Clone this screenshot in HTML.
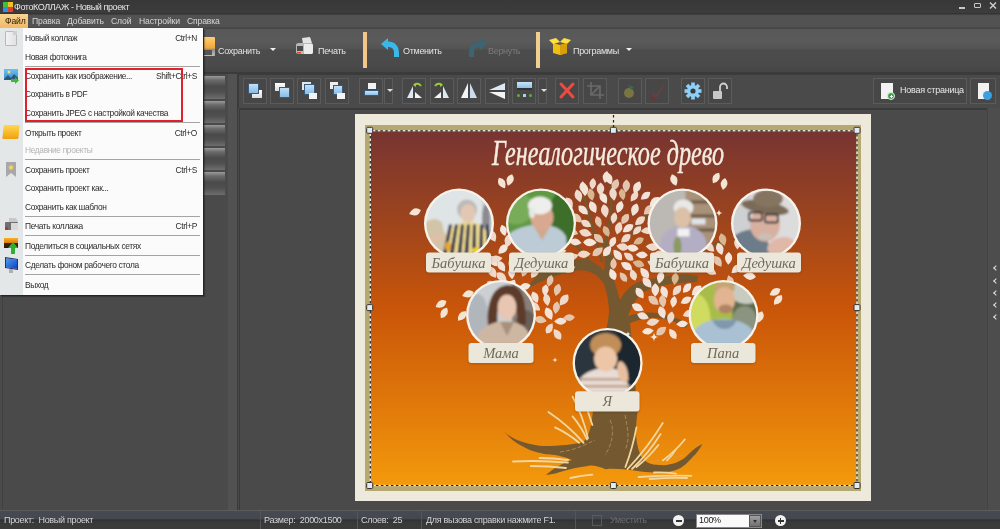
<!DOCTYPE html>
<html><head><meta charset="utf-8">
<style>
*{margin:0;padding:0;box-sizing:border-box}
html,body{width:1000px;height:529px;overflow:hidden;background:#4a4a4a;font-family:"Liberation Sans",sans-serif;}
body{will-change:transform}
.abs,div,span,svg{position:absolute}
#title{left:0;top:0;width:1000px;height:14px;background:linear-gradient(#383838,#3c3c3c 90%,#303030 100%);color:#e6e6e6;font-size:9px;line-height:14px;letter-spacing:-0.4px}
#menubar{left:0;top:14px;width:1000px;height:14px;background:linear-gradient(#3a3a3a,#525252 12%,#525252 90%,#464646);color:#d6d6d6;font-size:8.6px;line-height:14px;letter-spacing:-0.15px}
#menubar span{top:0;white-space:nowrap}
#toolbar{left:0;top:28px;width:1000px;height:44px;background:linear-gradient(#585858 0,#5a5a5a 30%,#545454 46%,#4c4c4c 51%,#4a4a4a 85%,#454545 100%)}
#tbdark{left:0;top:71.5px;width:1000px;height:3px;background:#3b3b3b}
#leftp{left:0;top:74px;width:228px;height:436px;background:#4a4a4a}
#lstrip{left:228px;top:74px;width:10px;height:436px;background:#525252;border-right:1px solid #3a3a3a}
#tb2{left:238px;top:74.5px;width:762px;height:33.5px;background:#4a4a4a;border-left:1px solid #3c3c3c}
#work{left:239px;top:107.5px;width:748px;height:402.5px;background:#4a4a4a;border-top:2px solid #3b3b3b;border-left:1px solid #3a3a3a}
#rstrip{left:987px;top:108px;width:13px;height:402px;background:#4d4d4d;border-left:1px solid #444}
#status{left:0;top:510px;width:1000px;height:19px;background:linear-gradient(#474a51 0,#454850 42%,#2f3134 50%,#383939 62%,#3b3b3b 100%);border-top:1px solid #5c5c5c;color:#d4d4d4;font-size:9px;line-height:18px}
#status span{top:0;white-space:nowrap;letter-spacing:-0.3px}
#status .vs{top:0;width:1px;height:19px;background:#555}
.btn{top:78px;height:26px;width:24px;border:1px solid #5b5b5b;background:#474747}
.dd{top:78px;height:26px;width:9px;border:1px solid #5b5b5b;background:#474747}
.dd:after{content:"";position:absolute;left:1.5px;top:10px;border-left:3px solid transparent;border-right:3px solid transparent;border-top:3px solid #ddd}
.tbt{color:#e4e4e4;font-size:9px;line-height:12px;top:44px;white-space:nowrap;letter-spacing:-0.3px}
#menu{left:0;top:28px;width:203px;height:267px;background:#fbfbfb;box-shadow:1px 1px 0 #262626,2px 2px 1px rgba(0,0,0,0.25);color:#2c2c2c;font-size:8.4px;letter-spacing:-0.35px}
#menu .strip{left:0;top:0;width:23px;height:267px;background:#e4e7e7}
#menu .it{left:25px;line-height:12px;white-space:nowrap}
#menu .sc{right:6px;line-height:12px;white-space:nowrap}
#menu .sep{left:25px;width:175px;height:1px;background:#a4a4a4}
</style></head><body>
<div id="title">
  <div style="left:3px;top:2px;width:10px;height:10px">
    <div style="left:0;top:0;width:5px;height:5px;background:#3fbf3f"></div>
    <div style="left:5px;top:0;width:5px;height:5px;background:#f0c020"></div>
    <div style="left:0;top:5px;width:5px;height:5px;background:#2f8fe0"></div>
    <div style="left:5px;top:5px;width:5px;height:5px;background:#e04030"></div>
  </div>
  <span style="left:14px;top:0">ФотоКОЛЛАЖ - Новый проект</span>
  <div style="left:959px;top:7px;width:6px;height:1.5px;background:#c8c8c8"></div>
  <div style="left:974px;top:3px;width:7px;height:5px;border:1.5px solid #c8c8c8;border-radius:1px"></div>
  <svg style="left:989px;top:2px" width="8" height="7" viewBox="0 0 8 7"><path d="M1 0.5 L7 6.5 M7 0.5 L1 6.5" stroke="#d0d0d0" stroke-width="1.4"/></svg>
</div>
<div id="menubar">
  <div style="left:0;top:0;width:28px;height:14px;background:linear-gradient(#f8d594,#f1b965)"></div>
  <span style="left:5px;color:#2a1a08">Файл</span>
  <span style="left:32px">Правка</span>
  <span style="left:67px">Добавить</span>
  <span style="left:111px">Слой</span>
  <span style="left:139px">Настройки</span>
  <span style="left:187px">Справка</span>
</div>
<div id="toolbar">
  <div style="left:0;top:0;width:1000px;height:1px;background:#464646"></div>
  <!-- save -->
  <div style="left:202px;top:9px;width:13px;height:19px;background:linear-gradient(#ffd070,#f2a43a 60%,#8a8a8a 62%,#bdbdbd);border-radius:1px"></div>
  <div style="left:204px;top:22px;width:8px;height:5px;background:#555"></div>
  <span class="tbt" style="left:218px;top:17px">Сохранить</span>
  <div style="left:270px;top:20px;border-left:3px solid transparent;border-right:3px solid transparent;border-top:3.5px solid #f0f0f0"></div>
  <!-- print -->
  <svg style="left:295px;top:9px" width="19" height="19" viewBox="0 0 19 19"><path d="M7 1 L15 0 L17 6 L8 7Z" fill="#e4e4e4"/><path d="M1 8 Q1 6 4 6 L16 6 Q18 6 18 9 L18 15 Q18 17 16 17 L4 17 Q1 17 1 15Z" fill="#b8b8b8"/><path d="M9 7 L17 7 Q18 7 18 9 L18 15 Q18 17 16 17 L9 17Z" fill="#ececec"/><rect x="2" y="9" width="6" height="5" fill="#4a4a4a"/><rect x="2" y="15" width="4" height="1.6" fill="#e04a20"/></svg>
  <span class="tbt" style="left:318px;top:17px">Печать</span>
  <div style="left:363px;top:4px;width:4px;height:36px;background:#f3c68a"></div>
  <!-- undo -->
  <svg style="left:381px;top:10px" width="20" height="20" viewBox="0 0 20 20"><path d="M0 6 L7 0 L7 3.5 C14 3.5 18 8 18 15 L18 19 L13 19 L13 15 C13 11 11 9 7 9 L7 12 Z" fill="#3ab8ea"/></svg>
  <span class="tbt" style="left:403px;top:17px">Отменить</span>
  <svg style="left:467px;top:10px" width="20" height="20" viewBox="0 0 20 20"><path d="M20 6 L13 0 L13 3.5 C6 3.5 2 8 2 15 L2 19 L7 19 L7 15 C7 11 9 9 13 9 L13 12 Z" fill="#3d6470"/></svg>
  <span class="tbt" style="left:488px;top:17px;color:#7c7c7c">Вернуть</span>
  <div style="left:536px;top:4px;width:4px;height:36px;background:#f0d090"></div>
  <!-- programs -->
  <svg style="left:549px;top:10px" width="22" height="17" viewBox="0 0 22 17"><path d="M4 5 L11 7 L18 5 L18 15 L11 17 L4 15Z" fill="#f0c010"/><path d="M0 2 L7 0 L11 4 L4 6Z M11 4 L15 0 L22 2 L18 6Z" fill="#ffe040"/><path d="M11 7 L18 5 L18 15 L11 17Z" fill="#d8a008"/></svg>
  <span class="tbt" style="left:573px;top:17px">Программы</span>
  <div style="left:626px;top:20px;border-left:3px solid transparent;border-right:3px solid transparent;border-top:3.5px solid #f0f0f0"></div>
</div>
<div id="tbdark"></div>
<div id="leftp"><div style="left:2px;top:0;width:1px;height:436px;background:#414141"></div></div>
<div id="lstrip"></div>
<div id="tb2"></div>
<div class="btn" style="left:243px"><div style="left:8px;top:11px;width:10px;height:8px;background:linear-gradient(#fff,#dcdcdc)"></div><div style="left:4px;top:4px;width:11px;height:11px;background:linear-gradient(#c0e0fa,#88bce6);border:1px solid #3a5a78"></div></div>
<div class="btn" style="left:270px"><div style="left:4px;top:4px;width:10px;height:8px;background:linear-gradient(#fff,#dcdcdc)"></div><div style="left:8px;top:8px;width:11px;height:11px;background:linear-gradient(#c0e0fa,#88bce6);border:1px solid #3a5a78"></div></div>
<div class="btn" style="left:297px"><div style="left:4px;top:3px;width:9px;height:8px;background:#dde8f2"></div><div style="left:6px;top:5px;width:11px;height:11px;background:linear-gradient(#c0e0fa,#88bce6);border:1px solid #3a5a78"></div><div style="left:11px;top:14px;width:8px;height:6px;background:#f4f4f4"></div></div>
<div class="btn" style="left:325px"><div style="left:4px;top:3px;width:8px;height:7px;background:#eee"></div><div style="left:7px;top:6px;width:10px;height:10px;background:linear-gradient(#c0e0fa,#88bce6);border:1px solid #3a5a78"></div><div style="left:11px;top:14px;width:8px;height:6px;background:#f4f4f4"></div></div>
<div class="btn" style="left:359px"><div style="left:8px;top:4px;width:8px;height:6px;background:#f2f2f2"></div><div style="left:4px;top:11px;width:15px;height:6px;background:linear-gradient(#c8e4fa,#90c0e8);border:1px solid #3a5a78"></div></div>
<div class="dd" style="left:384px"></div>
<div class="btn" style="left:402px"><svg width="22" height="24" viewBox="0 0 22 24"><path d="M4 19 L10 7 L10 19Z" fill="#dce8f4"/><path d="M12 13 L12 19 L19 19Z" fill="#f4f4f4"/><path d="M11 6 Q15 3 18 7" stroke="#9ccc30" stroke-width="2" fill="none"/><path d="M10 6 l3 -2 l0 4z" fill="#9ccc30"/></svg></div>
<div class="btn" style="left:430px"><svg width="22" height="24" viewBox="0 0 22 24"><path d="M18 19 L12 7 L12 19Z" fill="#dce8f4"/><path d="M10 13 L10 19 L3 19Z" fill="#f4f4f4"/><path d="M11 6 Q7 3 4 7" stroke="#9ccc30" stroke-width="2" fill="none"/><path d="M12 6 l-3 -2 l0 4z" fill="#9ccc30"/></svg></div>
<div class="btn" style="left:457px"><svg width="22" height="24" viewBox="0 0 22 24"><path d="M3 19 L10 4 L10 19Z" fill="#f4f4f4"/><path d="M12 4 L19 19 L12 19Z" fill="#c8dcee"/></svg></div>
<div class="btn" style="left:485px"><svg width="22" height="24" viewBox="0 0 22 24"><path d="M3 11 L19 4 L19 11Z" fill="#dce8f4"/><path d="M3 13 L19 13 L19 20Z" fill="#f4f4f4"/></svg></div>
<div class="btn" style="left:512px"><div style="left:4px;top:3px;width:15px;height:6px;background:linear-gradient(#c8e4fa,#90c0e8)"></div><div style="left:4px;top:9px;width:15px;height:2px;background:#333"></div><div style="left:4px;top:15px;width:3px;height:3px;background:#60b030;border-radius:2px"></div><div style="left:10px;top:15px;width:3px;height:3px;background:#a8d0f0"></div><div style="left:16px;top:15px;width:3px;height:3px;background:#60b030;border-radius:2px"></div></div>
<div class="dd" style="left:538px"></div>
<div class="btn" style="left:555px"><svg width="22" height="24" viewBox="0 0 22 24"><path d="M5 5 L17 18 M17 5 L5 18" stroke="#f04a40" stroke-width="3" stroke-linecap="round"/></svg></div>
<div class="btn" style="left:583px"><svg width="22" height="24" viewBox="0 0 22 24"><path d="M7 3 V16 H20 M3 7 H16 V20 M7 16 L16 7" stroke="#6a6a6a" stroke-width="1.6" fill="none"/></svg></div>
<div class="btn" style="left:618px"><svg width="22" height="24" viewBox="0 0 22 24"><circle cx="10" cy="14" r="5" fill="#7a7440"/><path d="M9 6 L15 8 L12 11z" fill="#3a6a50"/></svg></div>
<div class="btn" style="left:645px"><svg width="22" height="24" viewBox="0 0 22 24"><path d="M6 14 L10 18 L18 6" stroke="#6a4040" stroke-width="1.5" fill="none"/><path d="M5 18 L9 20" stroke="#7a3030" stroke-width="2"/></svg></div>
<div class="btn" style="left:681px"><svg width="22" height="24" viewBox="0 0 22 24"><g transform="translate(11 12)"><circle r="6" fill="#8cd0f8"/><g fill="#8cd0f8"><rect x="-1.8" y="-8.5" width="3.6" height="17"/><rect x="-1.8" y="-8.5" width="3.6" height="17" transform="rotate(45)"/><rect x="-1.8" y="-8.5" width="3.6" height="17" transform="rotate(90)"/><rect x="-1.8" y="-8.5" width="3.6" height="17" transform="rotate(135)"/></g><circle r="2.6" fill="#3a3a3a"/></g></svg></div>
<div class="btn" style="left:708px"><svg width="22" height="24" viewBox="0 0 22 24"><rect x="4" y="12" width="9" height="8" rx="1" fill="#c8c8c8"/><path d="M11 12 V8 A3.5 3.5 0 0 1 18 8 V10" stroke="#d0d0d0" stroke-width="1.8" fill="none"/></svg></div>
<div class="btn" style="left:873px;width:94px"><div style="left:7px;top:4px;width:12px;height:16px;background:#f2f2f2"></div><div style="left:13px;top:13px;width:8px;height:8px;border-radius:50%;background:#30a840;border:1px solid #e8e8e8"></div><div style="left:15.5px;top:16.5px;width:3px;height:1px;background:#fff"></div><div style="left:16.5px;top:15.5px;width:1px;height:3px;background:#fff"></div><span style="left:26px;top:6px;color:#e8e8e8;font-size:9px;letter-spacing:-0.25px;white-space:nowrap">Новая страница</span></div>
<div class="btn" style="left:970px;width:26px"><div style="left:7px;top:4px;width:11px;height:16px;background:#f2f2f2"></div><div style="left:12px;top:12px;width:9px;height:9px;border-radius:50%;background:#3aa0e0"></div></div>
<div id="work"></div>
<div id="rstrip"></div>
<div style="left:202px;top:76.0px;width:23px;height:23.0px;background:linear-gradient(#9a9a9a,#6a6a6a 18%,#4a4a4a 45%,#505050 70%,#6e6e6e);border-radius:2px 0 0 2px"></div>
<div style="left:202px;top:100.5px;width:23px;height:22.0px;background:linear-gradient(#9a9a9a,#6a6a6a 18%,#4a4a4a 45%,#505050 70%,#6e6e6e);border-radius:2px 0 0 2px"></div>
<div style="left:202px;top:124.5px;width:23px;height:21.5px;background:linear-gradient(#9a9a9a,#6a6a6a 18%,#4a4a4a 45%,#505050 70%,#6e6e6e);border-radius:2px 0 0 2px"></div>
<div style="left:202px;top:148.0px;width:23px;height:21.5px;background:linear-gradient(#9a9a9a,#6a6a6a 18%,#4a4a4a 45%,#505050 70%,#6e6e6e);border-radius:2px 0 0 2px"></div>
<div style="left:202px;top:172.0px;width:23px;height:22.5px;background:linear-gradient(#9a9a9a,#6a6a6a 18%,#4a4a4a 45%,#505050 70%,#6e6e6e);border-radius:2px 0 0 2px"></div>
<div style="left:993.5px;top:266.0px;width:4px;height:4px;border-left:1.6px solid #e4e4e4;border-top:1.6px solid #e4e4e4;transform:rotate(-45deg)"></div>
<div style="left:993.5px;top:278.5px;width:4px;height:4px;border-left:1.6px solid #e4e4e4;border-top:1.6px solid #e4e4e4;transform:rotate(-45deg)"></div>
<div style="left:993.5px;top:290.5px;width:4px;height:4px;border-left:1.6px solid #e4e4e4;border-top:1.6px solid #e4e4e4;transform:rotate(-45deg)"></div>
<div style="left:993.5px;top:303.0px;width:4px;height:4px;border-left:1.6px solid #e4e4e4;border-top:1.6px solid #e4e4e4;transform:rotate(-45deg)"></div>
<div style="left:993.5px;top:315.0px;width:4px;height:4px;border-left:1.6px solid #e4e4e4;border-top:1.6px solid #e4e4e4;transform:rotate(-45deg)"></div>

<!--COLLAGE-->
<svg style="left:0;top:0" width="1000" height="529" viewBox="0 0 1000 529">
<defs>
<linearGradient id="bg" x1="0" y1="130" x2="0" y2="486" gradientUnits="userSpaceOnUse">
<stop offset="0" stop-color="#773432"/><stop offset="0.25" stop-color="#9d441e"/><stop offset="0.5" stop-color="#c95509"/><stop offset="0.76" stop-color="#df770a"/><stop offset="1" stop-color="#f49a0c"/>
</linearGradient>
<clipPath id="content"><rect x="371" y="131" width="485.5" height="354.5"/></clipPath>
</defs>
<rect x="355" y="114" width="516" height="387" fill="#eeeadb"/>
<rect x="365" y="125" width="496" height="366" fill="#b5a870"/>
<rect x="371" y="131" width="485.5" height="354.5" fill="url(#bg)"/>
<g clip-path="url(#content)">
<path d="M504.4,431.8 C510,437 516,440 522,441.7 C530,444 538,446 544,446 C552,446 560,445.5 566,445 C574,444 580,443 583.6,441.7 C590,436 592,422 593,410 C596,385 601,360 604,340 C607,327 609,318 609,309 C608,297 606,290 604,284 C599,276 592,271 583.6,270.4 C578,270 574,271 570,272 C560,274 548,278 538,283 C534,285 530,287 526,290 C532,280 540,270 555,263 C565,259 578,258 587,260 C594,262 600,266 604,271 C606,262 604,252 601,240 L607,238 C611,250 613,262 612,272 C614,280 617,290 620,300 C624,292 630,286 638,282.3 C645,280 655,278 670,275.5 C680,274 690,274 698,276 L697,282 C688,282 678,283 670,284 C660,286 650,288 643,292.5 C636,298 632,306 628,316 C640,312 655,311 670,316 C678,318 684,321 688,324 L686,328 C680,324 672,320 662,318.5 C650,317 640,319 630,323 C633,350 635,385 637.5,412 C636,425 634,440 640.8,456 C645,462 650,465 660,465 C670,466 682,462 689,453.8 C694,449 698,446 702.4,444 C699,450 696,454 693.6,456 C688,462 684,467 676,470 C668,473 655,473 641,471.4 C630,470 615,468 605.6,469.2 C598,466 592,465 588,465.9 C578,467 570,469 560,472 C554,474 549,475 546,474.7 C552,470 560,464 572,460 C565,457 560,456 555,455 C548,454.5 544,454 540,453 C532,451 527,449 522,446 C514,442 509,437 504.4,431.8 Z" fill="#74582f"/>
<path d="M602,262 C596,240 590,220 584,196 M605,245 C610,225 613,205 611,186 M610,262 C626,240 640,222 656,204 M590,262 C582,250 575,244 566,238 M660,277 C680,262 700,250 725,240" stroke="#74582f" stroke-width="2.5" fill="none"/>
<path d="M610 420 C615 430 612 445 605 455 M625 415 C628 430 630 440 625 450 M560 452 C575 450 585 445 595 440 M650 462 C660 460 670 458 685 455" stroke="#c8a070" stroke-width="0.8" fill="none" stroke-dasharray="4 2" opacity="0.8"/>
<path d="M572.6 396.6 Q583.1 416.5 588.0 438.4" stroke="#f2d69e" stroke-width="1.8" fill="none" stroke-linecap="round"/>
<path d="M548.4 412.0 Q568.0 425.1 583.6 442.8" stroke="#f2d69e" stroke-width="1.8" fill="none" stroke-linecap="round"/>
<path d="M555.0 427.4 Q568.1 433.4 579.0 442.8" stroke="#f2d69e" stroke-width="1.8" fill="none" stroke-linecap="round"/>
<path d="M572.6 416.4 Q581.5 426.9 587.0 439.5" stroke="#f2d69e" stroke-width="1.8" fill="none" stroke-linecap="round"/>
<path d="M588.0 412.0 Q590.2 418.5 592.4 425.0" stroke="#f2d69e" stroke-width="1.8" fill="none" stroke-linecap="round"/>
<path d="M513.0 461.5 Q540.5 460.1 568.0 462.6" stroke="#f2d69e" stroke-width="1.8" fill="none" stroke-linecap="round"/>
<path d="M530.8 466.0 Q548.5 466.0 566.0 468.0" stroke="#f2d69e" stroke-width="1.8" fill="none" stroke-linecap="round"/>
<path d="M539.6 458.0 Q553.9 458.0 568.0 460.0" stroke="#f2d69e" stroke-width="1.8" fill="none" stroke-linecap="round"/>
<path d="M570.4 478.0 Q581.3 475.4 592.4 474.7" stroke="#f2d69e" stroke-width="1.8" fill="none" stroke-linecap="round"/>
<path d="M627.6 469.0 Q647.6 447.8 662.8 423.0" stroke="#f2d69e" stroke-width="1.8" fill="none" stroke-linecap="round"/>
<path d="M632.0 469.0 Q648.6 453.4 660.6 434.0" stroke="#f2d69e" stroke-width="1.8" fill="none" stroke-linecap="round"/>
<path d="M636.4 467.0 Q648.8 457.4 658.4 445.0" stroke="#f2d69e" stroke-width="1.8" fill="none" stroke-linecap="round"/>
<path d="M625.4 467.0 Q632.8 447.7 636.4 427.4" stroke="#f2d69e" stroke-width="1.8" fill="none" stroke-linecap="round"/>
<path d="M662.8 460.4 Q675.2 451.4 684.8 439.5" stroke="#f2d69e" stroke-width="1.8" fill="none" stroke-linecap="round"/>
<path d="M667.0 460.4 Q672.3 455.5 676.0 449.4" stroke="#f2d69e" stroke-width="1.8" fill="none" stroke-linecap="round"/>
<path d="M638.6 477.0 Q665.0 475.4 691.4 475.8" stroke="#f2d69e" stroke-width="1.8" fill="none" stroke-linecap="round"/>
<path d="M649.6 479.0 Q668.3 477.5 687.0 478.0" stroke="#f2d69e" stroke-width="1.8" fill="none" stroke-linecap="round"/>
<path d="M654.0 472.5 Q665.0 472.1 676.0 473.6" stroke="#f2d69e" stroke-width="1.8" fill="none" stroke-linecap="round"/>
<path d="M0,-6.2 Q7,-1 0,6.2 Q-7,-1 0,-6.2Z" transform="translate(591.0 194.6) rotate(-12) scale(1.01)" fill="#d8b690"/>
<path d="M0,-6.2 Q7,-1 0,6.2 Q-7,-1 0,-6.2Z" transform="translate(626.3 186.0) rotate(4) scale(1.06)" fill="#e4c6ae"/>
<path d="M0,-6.2 Q7,-1 0,6.2 Q-7,-1 0,-6.2Z" transform="translate(613.9 218.2) rotate(11) scale(0.97)" fill="#efd9cb"/>
<path d="M0,-6.2 Q7,-1 0,6.2 Q-7,-1 0,-6.2Z" transform="translate(562.3 233.8) rotate(-86) scale(1.00)" fill="#d8b690"/>
<path d="M0,-6.2 Q7,-1 0,6.2 Q-7,-1 0,-6.2Z" transform="translate(569.4 202.6) rotate(-33) scale(0.97)" fill="#efd9cb"/>
<path d="M0,-6.2 Q7,-1 0,6.2 Q-7,-1 0,-6.2Z" transform="translate(648.7 209.9) rotate(47) scale(1.09)" fill="#e4c6ae"/>
<path d="M0,-6.2 Q7,-1 0,6.2 Q-7,-1 0,-6.2Z" transform="translate(575.5 242.0) rotate(-81) scale(0.98)" fill="#f2e2d8"/>
<path d="M0,-6.2 Q7,-1 0,6.2 Q-7,-1 0,-6.2Z" transform="translate(625.0 219.0) rotate(33) scale(1.01)" fill="#e4c6ae"/>
<path d="M0,-6.2 Q7,-1 0,6.2 Q-7,-1 0,-6.2Z" transform="translate(615.2 184.9) rotate(23) scale(1.03)" fill="#e4c6ae"/>
<path d="M0,-6.2 Q7,-1 0,6.2 Q-7,-1 0,-6.2Z" transform="translate(589.9 242.4) rotate(-88) scale(1.09)" fill="#f4e6dc"/>
<path d="M0,-6.2 Q7,-1 0,6.2 Q-7,-1 0,-6.2Z" transform="translate(604.9 211.0) rotate(-11) scale(1.09)" fill="#efd9cb"/>
<path d="M0,-6.2 Q7,-1 0,6.2 Q-7,-1 0,-6.2Z" transform="translate(641.8 254.9) rotate(94) scale(0.98)" fill="#f2e2d8"/>
<path d="M0,-6.2 Q7,-1 0,6.2 Q-7,-1 0,-6.2Z" transform="translate(612.7 274.3) rotate(158) scale(1.02)" fill="#f4e6dc"/>
<path d="M0,-6.2 Q7,-1 0,6.2 Q-7,-1 0,-6.2Z" transform="translate(634.8 209.7) rotate(19) scale(1.06)" fill="#f2e2d8"/>
<path d="M0,-6.2 Q7,-1 0,6.2 Q-7,-1 0,-6.2Z" transform="translate(572.4 231.8) rotate(-70) scale(0.98)" fill="#e4c6ae"/>
<path d="M0,-6.2 Q7,-1 0,6.2 Q-7,-1 0,-6.2Z" transform="translate(560.2 251.5) rotate(261) scale(1.01)" fill="#efd9cb"/>
<path d="M0,-6.2 Q7,-1 0,6.2 Q-7,-1 0,-6.2Z" transform="translate(638.6 241.0) rotate(61) scale(0.95)" fill="#d8b690"/>
<path d="M0,-6.2 Q7,-1 0,6.2 Q-7,-1 0,-6.2Z" transform="translate(618.6 228.2) rotate(14) scale(1.06)" fill="#efd9cb"/>
<path d="M0,-6.2 Q7,-1 0,6.2 Q-7,-1 0,-6.2Z" transform="translate(607.2 251.1) rotate(215) scale(1.03)" fill="#f2e2d8"/>
<path d="M0,-6.2 Q7,-1 0,6.2 Q-7,-1 0,-6.2Z" transform="translate(597.7 251.6) rotate(232) scale(1.07)" fill="#e4c6ae"/>
<path d="M0,-6.2 Q7,-1 0,6.2 Q-7,-1 0,-6.2Z" transform="translate(644.5 273.0) rotate(142) scale(1.07)" fill="#f2e2d8"/>
<path d="M0,-6.2 Q7,-1 0,6.2 Q-7,-1 0,-6.2Z" transform="translate(586.1 223.7) rotate(-59) scale(0.98)" fill="#efd9cb"/>
<path d="M0,-6.2 Q7,-1 0,6.2 Q-7,-1 0,-6.2Z" transform="translate(619.6 206.9) rotate(20) scale(1.03)" fill="#f4e6dc"/>
<path d="M0,-6.2 Q7,-1 0,6.2 Q-7,-1 0,-6.2Z" transform="translate(658.9 254.0) rotate(83) scale(0.95)" fill="#efd9cb"/>
<path d="M0,-6.2 Q7,-1 0,6.2 Q-7,-1 0,-6.2Z" transform="translate(653.1 263.8) rotate(115) scale(1.01)" fill="#f2e2d8"/>
<path d="M0,-6.2 Q7,-1 0,6.2 Q-7,-1 0,-6.2Z" transform="translate(598.4 221.9) rotate(-17) scale(0.98)" fill="#e4c6ae"/>
<path d="M0,-6.2 Q7,-1 0,6.2 Q-7,-1 0,-6.2Z" transform="translate(578.5 195.9) rotate(-16) scale(1.06)" fill="#efd9cb"/>
<path d="M0,-6.2 Q7,-1 0,6.2 Q-7,-1 0,-6.2Z" transform="translate(592.7 183.8) rotate(6) scale(0.96)" fill="#efd9cb"/>
<path d="M0,-6.2 Q7,-1 0,6.2 Q-7,-1 0,-6.2Z" transform="translate(567.0 218.0) rotate(-73) scale(1.05)" fill="#f4e6dc"/>
<path d="M0,-6.2 Q7,-1 0,6.2 Q-7,-1 0,-6.2Z" transform="translate(622.3 194.3) rotate(-10) scale(0.96)" fill="#d8b690"/>
<path d="M0,-6.2 Q7,-1 0,6.2 Q-7,-1 0,-6.2Z" transform="translate(606.3 231.2) rotate(-24) scale(0.97)" fill="#d8b690"/>
<path d="M0,-6.2 Q7,-1 0,6.2 Q-7,-1 0,-6.2Z" transform="translate(593.0 207.1) rotate(-26) scale(1.05)" fill="#f2e2d8"/>
<path d="M0,-6.2 Q7,-1 0,6.2 Q-7,-1 0,-6.2Z" transform="translate(645.5 195.8) rotate(52) scale(0.97)" fill="#f2e2d8"/>
<path d="M0,-6.2 Q7,-1 0,6.2 Q-7,-1 0,-6.2Z" transform="translate(613.1 194.1) rotate(-9) scale(1.08)" fill="#efd9cb"/>
<path d="M0,-6.2 Q7,-1 0,6.2 Q-7,-1 0,-6.2Z" transform="translate(613.5 263.7) rotate(181) scale(0.95)" fill="#e4c6ae"/>
<path d="M0,-6.2 Q7,-1 0,6.2 Q-7,-1 0,-6.2Z" transform="translate(584.0 254.2) rotate(266) scale(1.07)" fill="#efd9cb"/>
<path d="M0,-6.2 Q7,-1 0,6.2 Q-7,-1 0,-6.2Z" transform="translate(659.3 227.2) rotate(79) scale(1.00)" fill="#f2e2d8"/>
<path d="M0,-6.2 Q7,-1 0,6.2 Q-7,-1 0,-6.2Z" transform="translate(659.1 218.1) rotate(46) scale(1.08)" fill="#f4e6dc"/>
<path d="M0,-6.2 Q7,-1 0,6.2 Q-7,-1 0,-6.2Z" transform="translate(623.4 277.0) rotate(144) scale(0.96)" fill="#e4c6ae"/>
<path d="M0,-6.2 Q7,-1 0,6.2 Q-7,-1 0,-6.2Z" transform="translate(646.8 230.7) rotate(85) scale(0.97)" fill="#efd9cb"/>
<path d="M0,-6.2 Q7,-1 0,6.2 Q-7,-1 0,-6.2Z" transform="translate(626.5 266.0) rotate(121) scale(1.06)" fill="#f4e6dc"/>
<path d="M0,-6.2 Q7,-1 0,6.2 Q-7,-1 0,-6.2Z" transform="translate(637.0 230.6) rotate(44) scale(0.95)" fill="#efd9cb"/>
<path d="M0,-6.2 Q7,-1 0,6.2 Q-7,-1 0,-6.2Z" transform="translate(634.3 196.7) rotate(36) scale(0.97)" fill="#efd9cb"/>
<path d="M0,-6.2 Q7,-1 0,6.2 Q-7,-1 0,-6.2Z" transform="translate(583.2 210.2) rotate(-47) scale(1.04)" fill="#f2e2d8"/>
<path d="M0,-6.2 Q7,-1 0,6.2 Q-7,-1 0,-6.2Z" transform="translate(603.5 198.1) rotate(-29) scale(1.02)" fill="#f4e6dc"/>
<path d="M0,-6.2 Q7,-1 0,6.2 Q-7,-1 0,-6.2Z" transform="translate(572.7 256.8) rotate(252) scale(0.97)" fill="#efd9cb"/>
<path d="M0,-6.2 Q7,-1 0,6.2 Q-7,-1 0,-6.2Z" transform="translate(617.6 255.0) rotate(142) scale(1.05)" fill="#f2e2d8"/>
<path d="M0,-6.2 Q7,-1 0,6.2 Q-7,-1 0,-6.2Z" transform="translate(632.3 248.0) rotate(100) scale(1.03)" fill="#f4e6dc"/>
<path d="M0,-6.2 Q7,-1 0,6.2 Q-7,-1 0,-6.2Z" transform="translate(661.0 238.2) rotate(77) scale(1.05)" fill="#efd9cb"/>
<path d="M0,-6.2 Q7,-1 0,6.2 Q-7,-1 0,-6.2Z" transform="translate(633.3 274.7) rotate(159) scale(1.00)" fill="#efd9cb"/>
<path d="M0,-6.2 Q7,-1 0,6.2 Q-7,-1 0,-6.2Z" transform="translate(652.3 247.0) rotate(96) scale(1.09)" fill="#efd9cb"/>
<path d="M0,-6.2 Q7,-1 0,6.2 Q-7,-1 0,-6.2Z" transform="translate(608.8 178.4) rotate(-23) scale(1.05)" fill="#f2e2d8"/>
<path d="M0,-6.2 Q7,-1 0,6.2 Q-7,-1 0,-6.2Z" transform="translate(612.6 242.1) rotate(26) scale(0.96)" fill="#f2e2d8"/>
<path d="M0,-6.2 Q7,-1 0,6.2 Q-7,-1 0,-6.2Z" transform="translate(576.8 218.1) rotate(-53) scale(1.08)" fill="#e4c6ae"/>
<path d="M0,-6.2 Q7,-1 0,6.2 Q-7,-1 0,-6.2Z" transform="translate(598.7 238.5) rotate(-47) scale(1.04)" fill="#e4c6ae"/>
<path d="M0,-6.2 Q7,-1 0,6.2 Q-7,-1 0,-6.2Z" transform="translate(638.5 263.8) rotate(108) scale(1.00)" fill="#d8b690"/>
<path d="M0,-6.2 Q7,-1 0,6.2 Q-7,-1 0,-6.2Z" transform="translate(559.3 223.4) rotate(-50) scale(0.97)" fill="#d8b690"/>
<path d="M0,-6.2 Q7,-1 0,6.2 Q-7,-1 0,-6.2Z" transform="translate(640.0 220.8) rotate(51) scale(1.04)" fill="#efd9cb"/>
<path d="M0,-6.2 Q7,-1 0,6.2 Q-7,-1 0,-6.2Z" transform="translate(622.6 246.9) rotate(101) scale(1.03)" fill="#efd9cb"/>
<path d="M0,-6.2 Q7,-1 0,6.2 Q-7,-1 0,-6.2Z" transform="translate(628.0 228.4) rotate(56) scale(1.04)" fill="#f2e2d8"/>
<path d="M0,-6.2 Q7,-1 0,6.2 Q-7,-1 0,-6.2Z" transform="translate(600.5 189.2) rotate(1) scale(1.07)" fill="#efd9cb"/>
<path d="M0,-6.2 Q7,-1 0,6.2 Q-7,-1 0,-6.2Z" transform="translate(654.5 202.0) rotate(44) scale(1.09)" fill="#f4e6dc"/>
<path d="M0,-6.2 Q7,-1 0,6.2 Q-7,-1 0,-6.2Z" transform="translate(569.3 268.8) rotate(252) scale(1.03)" fill="#efd9cb"/>
<path d="M0,-6.2 Q7,-1 0,6.2 Q-7,-1 0,-6.2Z" transform="translate(636.9 187.5) rotate(26) scale(1.07)" fill="#f2e2d8"/>
<path d="M0,-6.2 Q7,-1 0,6.2 Q-7,-1 0,-6.2Z" transform="translate(562.5 208.9) rotate(-50) scale(1.01)" fill="#efd9cb"/>
<path d="M0,-6.2 Q7,-1 0,6.2 Q-7,-1 0,-6.2Z" transform="translate(585.5 233.0) rotate(-73) scale(1.08)" fill="#efd9cb"/>
<path d="M0,-6.2 Q7,-1 0,6.2 Q-7,-1 0,-6.2Z" transform="translate(625.8 238.4) rotate(50) scale(1.00)" fill="#efd9cb"/>
<path d="M0,-6.2 Q7,-1 0,6.2 Q-7,-1 0,-6.2Z" transform="translate(628.7 256.5) rotate(128) scale(0.98)" fill="#efd9cb"/>
<path d="M0,-6.2 Q7,-1 0,6.2 Q-7,-1 0,-6.2Z" transform="translate(566.2 242.5) rotate(-105) scale(0.97)" fill="#efd9cb"/>
<path d="M0,-6.2 Q7,-1 0,6.2 Q-7,-1 0,-6.2Z" transform="translate(563.4 260.6) rotate(267) scale(1.01)" fill="#f2e2d8"/>
<path d="M0,-6.2 Q7,-1 0,6.2 Q-7,-1 0,-6.2Z" transform="translate(582.8 187.2) rotate(-2) scale(0.98)" fill="#f2e2d8"/>
<path d="M0,-6.2 Q7,-1 0,6.2 Q-7,-1 0,-6.2Z" transform="translate(721.2 285.7) rotate(206) scale(1.00)" fill="#d8b690"/>
<path d="M0,-6.2 Q7,-1 0,6.2 Q-7,-1 0,-6.2Z" transform="translate(736.3 268.8) rotate(49) scale(1.01)" fill="#f2e2d8"/>
<path d="M0,-6.2 Q7,-1 0,6.2 Q-7,-1 0,-6.2Z" transform="translate(751.1 248.7) rotate(22) scale(1.06)" fill="#d8b690"/>
<path d="M0,-6.2 Q7,-1 0,6.2 Q-7,-1 0,-6.2Z" transform="translate(722.0 296.7) rotate(204) scale(0.96)" fill="#efd9cb"/>
<path d="M0,-6.2 Q7,-1 0,6.2 Q-7,-1 0,-6.2Z" transform="translate(728.5 258.4) rotate(3) scale(1.04)" fill="#f4e6dc"/>
<path d="M0,-6.2 Q7,-1 0,6.2 Q-7,-1 0,-6.2Z" transform="translate(705.5 256.0) rotate(-60) scale(1.01)" fill="#efd9cb"/>
<path d="M0,-6.2 Q7,-1 0,6.2 Q-7,-1 0,-6.2Z" transform="translate(735.9 226.0) rotate(0) scale(1.07)" fill="#efd9cb"/>
<path d="M0,-6.2 Q7,-1 0,6.2 Q-7,-1 0,-6.2Z" transform="translate(730.4 281.0) rotate(160) scale(1.00)" fill="#e4c6ae"/>
<path d="M0,-6.2 Q7,-1 0,6.2 Q-7,-1 0,-6.2Z" transform="translate(709.6 246.9) rotate(-46) scale(1.05)" fill="#efd9cb"/>
<path d="M0,-6.2 Q7,-1 0,6.2 Q-7,-1 0,-6.2Z" transform="translate(717.8 261.4) rotate(-35) scale(1.04)" fill="#e4c6ae"/>
<path d="M0,-6.2 Q7,-1 0,6.2 Q-7,-1 0,-6.2Z" transform="translate(746.7 258.3) rotate(38) scale(1.10)" fill="#d8b690"/>
<path d="M0,-6.2 Q7,-1 0,6.2 Q-7,-1 0,-6.2Z" transform="translate(749.5 276.2) rotate(98) scale(1.04)" fill="#f4e6dc"/>
<path d="M0,-6.2 Q7,-1 0,6.2 Q-7,-1 0,-6.2Z" transform="translate(722.7 239.5) rotate(-16) scale(1.05)" fill="#d8b690"/>
<path d="M0,-6.2 Q7,-1 0,6.2 Q-7,-1 0,-6.2Z" transform="translate(710.7 271.0) rotate(-59) scale(1.03)" fill="#f4e6dc"/>
<path d="M0,-6.2 Q7,-1 0,6.2 Q-7,-1 0,-6.2Z" transform="translate(737.8 243.1) rotate(4) scale(1.05)" fill="#efd9cb"/>
<path d="M0,-6.2 Q7,-1 0,6.2 Q-7,-1 0,-6.2Z" transform="translate(713.5 292.4) rotate(207) scale(0.97)" fill="#d8b690"/>
<path d="M0,-6.2 Q7,-1 0,6.2 Q-7,-1 0,-6.2Z" transform="translate(719.9 248.9) rotate(-19) scale(1.04)" fill="#f2e2d8"/>
<path d="M0,-6.2 Q7,-1 0,6.2 Q-7,-1 0,-6.2Z" transform="translate(753.0 266.5) rotate(93) scale(1.07)" fill="#d8b690"/>
<path d="M0,-6.2 Q7,-1 0,6.2 Q-7,-1 0,-6.2Z" transform="translate(750.1 238.8) rotate(14) scale(0.99)" fill="#f2e2d8"/>
<path d="M0,-6.2 Q7,-1 0,6.2 Q-7,-1 0,-6.2Z" transform="translate(711.3 231.7) rotate(-38) scale(0.96)" fill="#efd9cb"/>
<path d="M0,-6.2 Q7,-1 0,6.2 Q-7,-1 0,-6.2Z" transform="translate(662.0 312.5) rotate(-20) scale(1.08)" fill="#f2e2d8"/>
<path d="M0,-6.2 Q7,-1 0,6.2 Q-7,-1 0,-6.2Z" transform="translate(675.1 278.7) rotate(8) scale(1.01)" fill="#d8b690"/>
<path d="M0,-6.2 Q7,-1 0,6.2 Q-7,-1 0,-6.2Z" transform="translate(637.7 307.4) rotate(-63) scale(1.07)" fill="#f4e6dc"/>
<path d="M0,-6.2 Q7,-1 0,6.2 Q-7,-1 0,-6.2Z" transform="translate(696.9 319.8) rotate(84) scale(1.00)" fill="#f4e6dc"/>
<path d="M0,-6.2 Q7,-1 0,6.2 Q-7,-1 0,-6.2Z" transform="translate(664.3 292.1) rotate(-22) scale(1.04)" fill="#f2e2d8"/>
<path d="M0,-6.2 Q7,-1 0,6.2 Q-7,-1 0,-6.2Z" transform="translate(643.0 316.1) rotate(-70) scale(1.00)" fill="#f2e2d8"/>
<path d="M0,-6.2 Q7,-1 0,6.2 Q-7,-1 0,-6.2Z" transform="translate(686.0 300.4) rotate(62) scale(0.98)" fill="#f2e2d8"/>
<path d="M0,-6.2 Q7,-1 0,6.2 Q-7,-1 0,-6.2Z" transform="translate(639.8 293.2) rotate(-34) scale(1.04)" fill="#f2e2d8"/>
<path d="M0,-6.2 Q7,-1 0,6.2 Q-7,-1 0,-6.2Z" transform="translate(682.1 323.8) rotate(84) scale(0.95)" fill="#f4e6dc"/>
<path d="M0,-6.2 Q7,-1 0,6.2 Q-7,-1 0,-6.2Z" transform="translate(661.2 331.0) rotate(231) scale(1.04)" fill="#e4c6ae"/>
<path d="M0,-6.2 Q7,-1 0,6.2 Q-7,-1 0,-6.2Z" transform="translate(660.5 277.5) rotate(14) scale(1.02)" fill="#f2e2d8"/>
<path d="M0,-6.2 Q7,-1 0,6.2 Q-7,-1 0,-6.2Z" transform="translate(647.9 331.2) rotate(262) scale(0.95)" fill="#f4e6dc"/>
<path d="M0,-6.2 Q7,-1 0,6.2 Q-7,-1 0,-6.2Z" transform="translate(653.5 300.5) rotate(-50) scale(1.08)" fill="#e4c6ae"/>
<path d="M0,-6.2 Q7,-1 0,6.2 Q-7,-1 0,-6.2Z" transform="translate(696.7 308.9) rotate(75) scale(1.08)" fill="#f2e2d8"/>
<path d="M0,-6.2 Q7,-1 0,6.2 Q-7,-1 0,-6.2Z" transform="translate(672.8 333.8) rotate(146) scale(0.99)" fill="#f2e2d8"/>
<path d="M0,-6.2 Q7,-1 0,6.2 Q-7,-1 0,-6.2Z" transform="translate(673.6 301.8) rotate(10) scale(0.96)" fill="#f2e2d8"/>
<path d="M0,-6.2 Q7,-1 0,6.2 Q-7,-1 0,-6.2Z" transform="translate(676.8 290.4) rotate(38) scale(1.04)" fill="#efd9cb"/>
<path d="M0,-6.2 Q7,-1 0,6.2 Q-7,-1 0,-6.2Z" transform="translate(698.5 299.7) rotate(37) scale(1.00)" fill="#f4e6dc"/>
<path d="M0,-6.2 Q7,-1 0,6.2 Q-7,-1 0,-6.2Z" transform="translate(647.2 282.6) rotate(-40) scale(1.07)" fill="#f2e2d8"/>
<path d="M0,-6.2 Q7,-1 0,6.2 Q-7,-1 0,-6.2Z" transform="translate(687.0 288.1) rotate(40) scale(0.99)" fill="#f4e6dc"/>
<path d="M0,-6.2 Q7,-1 0,6.2 Q-7,-1 0,-6.2Z" transform="translate(688.5 313.5) rotate(69) scale(0.99)" fill="#efd9cb"/>
<path d="M0,-6.2 Q7,-1 0,6.2 Q-7,-1 0,-6.2Z" transform="translate(652.9 322.1) rotate(257) scale(1.08)" fill="#efd9cb"/>
<path d="M0,-6.2 Q7,-1 0,6.2 Q-7,-1 0,-6.2Z" transform="translate(670.7 317.7) rotate(13) scale(1.03)" fill="#efd9cb"/>
<path d="M0,-6.2 Q7,-1 0,6.2 Q-7,-1 0,-6.2Z" transform="translate(655.3 290.1) rotate(0) scale(1.09)" fill="#f2e2d8"/>
<path d="M0,-6.2 Q7,-1 0,6.2 Q-7,-1 0,-6.2Z" transform="translate(696.6 290.5) rotate(44) scale(1.09)" fill="#f2e2d8"/>
<path d="M0,-6.2 Q7,-1 0,6.2 Q-7,-1 0,-6.2Z" transform="translate(662.6 301.2) rotate(-7) scale(1.05)" fill="#e4c6ae"/>
<path d="M0,-6.2 Q7,-1 0,6.2 Q-7,-1 0,-6.2Z" transform="translate(512.0 261.7) rotate(29) scale(0.99)" fill="#e4c6ae"/>
<path d="M0,-6.2 Q7,-1 0,6.2 Q-7,-1 0,-6.2Z" transform="translate(534.7 272.7) rotate(32) scale(1.02)" fill="#efd9cb"/>
<path d="M0,-6.2 Q7,-1 0,6.2 Q-7,-1 0,-6.2Z" transform="translate(511.7 273.1) rotate(-4) scale(0.99)" fill="#f2e2d8"/>
<path d="M0,-6.2 Q7,-1 0,6.2 Q-7,-1 0,-6.2Z" transform="translate(524.6 271.3) rotate(23) scale(0.95)" fill="#e4c6ae"/>
<path d="M0,-6.2 Q7,-1 0,6.2 Q-7,-1 0,-6.2Z" transform="translate(521.6 262.6) rotate(47) scale(1.02)" fill="#efd9cb"/>
<path d="M0,-6.2 Q7,-1 0,6.2 Q-7,-1 0,-6.2Z" transform="translate(501.5 266.3) rotate(-33) scale(1.01)" fill="#f2e2d8"/>
<path d="M0,-6.2 Q7,-1 0,6.2 Q-7,-1 0,-6.2Z" transform="translate(481.4 266.4) rotate(-26) scale(0.96)" fill="#d8b690"/>
<path d="M0,-6.2 Q7,-1 0,6.2 Q-7,-1 0,-6.2Z" transform="translate(524.7 286.5) rotate(78) scale(0.98)" fill="#f4e6dc"/>
<path d="M0,-6.2 Q7,-1 0,6.2 Q-7,-1 0,-6.2Z" transform="translate(492.4 272.1) rotate(-32) scale(1.08)" fill="#efd9cb"/>
<path d="M0,-6.2 Q7,-1 0,6.2 Q-7,-1 0,-6.2Z" transform="translate(511.3 285.6) rotate(31) scale(1.09)" fill="#f2e2d8"/>
<path d="M0,-6.2 Q7,-1 0,6.2 Q-7,-1 0,-6.2Z" transform="translate(492.1 284.6) rotate(-58) scale(0.95)" fill="#e4c6ae"/>
<path d="M0,-6.2 Q7,-1 0,6.2 Q-7,-1 0,-6.2Z" transform="translate(493.4 261.0) rotate(-37) scale(1.08)" fill="#f2e2d8"/>
<path d="M0,-6.2 Q7,-1 0,6.2 Q-7,-1 0,-6.2Z" transform="translate(502.9 289.7) rotate(-108) scale(0.96)" fill="#d8b690"/>
<path d="M0,-6.2 Q7,-1 0,6.2 Q-7,-1 0,-6.2Z" transform="translate(501.6 277.0) rotate(-50) scale(1.09)" fill="#efd9cb"/>
<path d="M0,-6.2 Q7,-1 0,6.2 Q-7,-1 0,-6.2Z" transform="translate(503.0 249.0) rotate(44) scale(1.06)" fill="#f4e6dc"/>
<path d="M0,-6.2 Q7,-1 0,6.2 Q-7,-1 0,-6.2Z" transform="translate(508.3 240.7) rotate(11) scale(1.09)" fill="#efd9cb"/>
<path d="M0,-6.2 Q7,-1 0,6.2 Q-7,-1 0,-6.2Z" transform="translate(503.5 230.4) rotate(-17) scale(0.96)" fill="#f4e6dc"/>
<path d="M0,-6.2 Q7,-1 0,6.2 Q-7,-1 0,-6.2Z" transform="translate(492.3 235.7) rotate(-27) scale(1.09)" fill="#efd9cb"/>
<path d="M0,-6.2 Q7,-1 0,6.2 Q-7,-1 0,-6.2Z" transform="translate(496.2 259.1) rotate(261) scale(1.04)" fill="#efd9cb"/>
<path d="M0,-6.2 Q7,-1 0,6.2 Q-7,-1 0,-6.2Z" transform="translate(546.8 299.7) rotate(-9) scale(1.01)" fill="#efd9cb"/>
<path d="M0,-6.2 Q7,-1 0,6.2 Q-7,-1 0,-6.2Z" transform="translate(534.8 306.4) rotate(-54) scale(1.08)" fill="#efd9cb"/>
<path d="M0,-6.2 Q7,-1 0,6.2 Q-7,-1 0,-6.2Z" transform="translate(549.4 328.4) rotate(211) scale(0.98)" fill="#efd9cb"/>
<path d="M0,-6.2 Q7,-1 0,6.2 Q-7,-1 0,-6.2Z" transform="translate(560.4 321.3) rotate(88) scale(1.01)" fill="#f2e2d8"/>
<path d="M0,-6.2 Q7,-1 0,6.2 Q-7,-1 0,-6.2Z" transform="translate(557.4 289.9) rotate(15) scale(1.03)" fill="#e4c6ae"/>
<path d="M0,-6.2 Q7,-1 0,6.2 Q-7,-1 0,-6.2Z" transform="translate(568.9 317.7) rotate(84) scale(0.97)" fill="#e4c6ae"/>
<path d="M0,-6.2 Q7,-1 0,6.2 Q-7,-1 0,-6.2Z" transform="translate(540.5 319.7) rotate(-75) scale(1.03)" fill="#e4c6ae"/>
<path d="M0,-6.2 Q7,-1 0,6.2 Q-7,-1 0,-6.2Z" transform="translate(564.0 300.0) rotate(37) scale(1.09)" fill="#efd9cb"/>
<path d="M0,-6.2 Q7,-1 0,6.2 Q-7,-1 0,-6.2Z" transform="translate(545.3 290.3) rotate(8) scale(0.97)" fill="#f2e2d8"/>
<path d="M0,-6.2 Q7,-1 0,6.2 Q-7,-1 0,-6.2Z" transform="translate(557.3 334.4) rotate(147) scale(1.02)" fill="#efd9cb"/>
<path d="M0,-6.2 Q7,-1 0,6.2 Q-7,-1 0,-6.2Z" transform="translate(548.9 313.6) rotate(-25) scale(1.09)" fill="#f2e2d8"/>
<path d="M0,-6.2 Q7,-1 0,6.2 Q-7,-1 0,-6.2Z" transform="translate(550.0 280.8) rotate(16) scale(0.98)" fill="#e4c6ae"/>
<path d="M0,-6.2 Q7,-1 0,6.2 Q-7,-1 0,-6.2Z" transform="translate(556.3 307.8) rotate(9) scale(1.01)" fill="#e4c6ae"/>
<path d="M0,-6.2 Q7,-1 0,6.2 Q-7,-1 0,-6.2Z" transform="translate(535.0 297.3) rotate(-23) scale(1.01)" fill="#f2e2d8"/>
<path d="M0,-6.2 Q7,-1 0,6.2 Q-7,-1 0,-6.2Z" transform="translate(502.0 183.0) rotate(-30) scale(1.00)" fill="#f3e4d4"/>
<path d="M0,-6.2 Q7,-1 0,6.2 Q-7,-1 0,-6.2Z" transform="translate(510.0 180.0) rotate(20) scale(1.00)" fill="#f3e4d4"/>
<path d="M0,-6.2 Q7,-1 0,6.2 Q-7,-1 0,-6.2Z" transform="translate(415.0 212.0) rotate(70) scale(1.00)" fill="#f3e4d4"/>
<path d="M0,-6.2 Q7,-1 0,6.2 Q-7,-1 0,-6.2Z" transform="translate(441.0 304.0) rotate(60) scale(1.00)" fill="#f3e4d4"/>
<path d="M0,-6.2 Q7,-1 0,6.2 Q-7,-1 0,-6.2Z" transform="translate(444.0 313.0) rotate(30) scale(1.00)" fill="#f3e4d4"/>
<path d="M0,-6.2 Q7,-1 0,6.2 Q-7,-1 0,-6.2Z" transform="translate(468.0 294.0) rotate(70) scale(1.00)" fill="#f3e4d4"/>
<path d="M0,-6.2 Q7,-1 0,6.2 Q-7,-1 0,-6.2Z" transform="translate(462.0 316.0) rotate(40) scale(1.00)" fill="#f3e4d4"/>
<path d="M0,-6.2 Q7,-1 0,6.2 Q-7,-1 0,-6.2Z" transform="translate(606.0 177.0) rotate(10) scale(1.00)" fill="#f3e4d4"/>
<path d="M0,-6.2 Q7,-1 0,6.2 Q-7,-1 0,-6.2Z" transform="translate(674.0 180.0) rotate(-20) scale(1.00)" fill="#f3e4d4"/>
<path d="M0,-6.2 Q7,-1 0,6.2 Q-7,-1 0,-6.2Z" transform="translate(716.0 178.0) rotate(30) scale(1.00)" fill="#f3e4d4"/>
<path d="M0,-6.2 Q7,-1 0,6.2 Q-7,-1 0,-6.2Z" transform="translate(724.0 184.0) rotate(10) scale(1.00)" fill="#f3e4d4"/>
<path d="M0,-6.2 Q7,-1 0,6.2 Q-7,-1 0,-6.2Z" transform="translate(775.0 292.0) rotate(60) scale(1.00)" fill="#f3e4d4"/>
<path d="M0,-6.2 Q7,-1 0,6.2 Q-7,-1 0,-6.2Z" transform="translate(778.0 300.0) rotate(40) scale(1.00)" fill="#f3e4d4"/>
<path d="M0,-6.2 Q7,-1 0,6.2 Q-7,-1 0,-6.2Z" transform="translate(760.0 317.0) rotate(20) scale(1.00)" fill="#f3e4d4"/>
<path d="M0,-6.2 Q7,-1 0,6.2 Q-7,-1 0,-6.2Z" transform="translate(585.0 190.0) rotate(0) scale(1.00)" fill="#f3e4d4"/>
<path d="M654 332 Q654 337 659 337 Q654 337 654 342 Q654 337 649 337 Q654 337 654 332Z" fill="#f6e6d6"/>
<path d="M719 209 Q719 213 723 213 Q719 213 719 217 Q719 213 715 213 Q719 213 719 209Z" fill="#f6e6d6"/>
<path d="M628 331 Q628 334 631 334 Q628 334 628 337 Q628 334 625 334 Q628 334 628 331Z" fill="#f6e6d6"/>
<path d="M555 357 Q555 360 558 360 Q555 360 555 363 Q555 360 552 360 Q555 360 555 357Z" fill="#f6e6d6"/>
</g>
<text transform="translate(608 165) scale(1 1.2)" x="0" y="0" text-anchor="middle" font-family="Liberation Serif" font-style="italic" font-size="29" fill="#f5ece0" stroke="#f5ece0" stroke-width="0.35" textLength="232" lengthAdjust="spacingAndGlyphs">Генеалогическое древо</text>
<svg style="left:0;top:0" width="1000" height="529" viewBox="0 0 1000 529"><defs>
<clipPath id="cp0"><circle cx="459.0" cy="223.5" r="32.7"/></clipPath>
<clipPath id="cp1"><circle cx="541.0" cy="223.5" r="32.7"/></clipPath>
<clipPath id="cp2"><circle cx="682.5" cy="223.5" r="32.7"/></clipPath>
<clipPath id="cp3"><circle cx="766.0" cy="223.5" r="32.7"/></clipPath>
<clipPath id="cp4"><circle cx="501.0" cy="315.0" r="32.7"/></clipPath>
<clipPath id="cp5"><circle cx="723.5" cy="315.0" r="32.7"/></clipPath>
<clipPath id="cp6"><circle cx="607.6" cy="363.0" r="32.7"/></clipPath>
<filter id="sh" x="-20%" y="-20%" width="140%" height="140%"><feGaussianBlur stdDeviation="1"/></filter>
<filter id="pb" x="-10%" y="-10%" width="120%" height="120%"><feGaussianBlur stdDeviation="0.9"/></filter></defs>
<circle cx="459.0" cy="223.5" r="35.0" fill="#f8f3ea"/>
<g clip-path="url(#cp0)"><g filter="url(#pb)">
<rect x="424.0" y="188.5" width="70.0" height="70.0" fill="#dfe4e6"/>
<rect x="482.0" y="188.5" width="12.0" height="70.0" fill="#c9ced2"/>
<ellipse cx="486.0" cy="218.5" rx="4.0" ry="14.0" fill="#8a8a90" transform="rotate(0 486.0 218.5)"/>
<path d="M424.0,258.5 L424.0,224.5 C429.0,218.5 436.0,216.5 442.0,222.5 L450.0,258.5 Z" fill="#d2c4a8" />
<ellipse cx="436.0" cy="238.5" rx="12.0" ry="5.0" fill="#dcc0a8" transform="rotate(-15 436.0 238.5)"/>
<ellipse cx="467.0" cy="209.5" rx="10.0" ry="10.0" fill="#bdbab6" transform="rotate(0 467.0 209.5)"/>
<path d="M444.0,258.5 L446.0,234.5 C450.0,226.5 458.0,222.5 466.0,221.5 L472.0,221.5 C482.0,224.5 488.0,230.5 490.0,240.5 L492.0,258.5 Z" fill="#f0dc90" />
<path d="M442.0,258.5 L449.0,224.5 L452.0,224.5 L446.0,258.5 Z" fill="#2a3050" />
<path d="M449.0,258.5 L455.0,224.5 L458.0,224.5 L453.0,258.5 Z" fill="#2a3050" />
<path d="M457.0,258.5 L461.0,224.5 L464.0,224.5 L461.0,258.5 Z" fill="#2a3050" />
<path d="M464.0,258.5 L467.0,224.5 L470.0,224.5 L468.0,258.5 Z" fill="#2a3050" />
<path d="M472.0,258.5 L473.0,224.5 L476.0,224.5 L476.0,258.5 Z" fill="#2a3050" />
<path d="M479.0,258.5 L480.0,224.5 L483.0,224.5 L483.0,258.5 Z" fill="#2a3050" />
<path d="M487.0,258.5 L486.0,224.5 L489.0,224.5 L491.0,258.5 Z" fill="#2a3050" />
<ellipse cx="468.0" cy="213.5" rx="7.5" ry="9.5" fill="#e2c8b4" transform="rotate(0 468.0 213.5)"/>
<ellipse cx="448.0" cy="246.5" rx="3.0" ry="5.0" fill="#e8a830" transform="rotate(0 448.0 246.5)"/>
<ellipse cx="476.0" cy="250.5" rx="4.0" ry="3.0" fill="#f0d020" transform="rotate(0 476.0 250.5)"/>
</g></g>
<circle cx="541.0" cy="223.5" r="35.0" fill="#f8f3ea"/>
<g clip-path="url(#cp1)"><g filter="url(#pb)">
<rect x="506.0" y="188.5" width="70.0" height="70.0" fill="#5e9a42"/>
<ellipse cx="566.0" cy="228.5" rx="20.0" ry="40.0" fill="#3c6e2a" transform="rotate(0 566.0 228.5)"/>
<ellipse cx="516.0" cy="208.5" rx="18.0" ry="16.0" fill="#78ac58" transform="rotate(0 516.0 208.5)"/>
<path d="M506.0,258.5 L506.0,236.5 C514.0,228.5 528.0,224.5 540.0,224.5 C552.0,224.5 562.0,228.5 566.0,236.5 L568.0,258.5 Z" fill="#bccbd6" />
<path d="M534.0,226.5 L542.0,240.5 L550.0,226.5 Z" fill="#d0a890" />
<ellipse cx="542.0" cy="217.5" rx="11.5" ry="13.0" fill="#d8a890" transform="rotate(0 542.0 217.5)"/>
<ellipse cx="540.0" cy="205.5" rx="12.0" ry="9.0" fill="#eeeeec" transform="rotate(0 540.0 205.5)"/>
<ellipse cx="532.0" cy="212.5" rx="3.0" ry="6.0" fill="#e8e8e6" transform="rotate(0 532.0 212.5)"/>
</g></g>
<circle cx="682.5" cy="223.5" r="35.0" fill="#f8f3ea"/>
<g clip-path="url(#cp2)"><g filter="url(#pb)">
<rect x="647.5" y="188.5" width="70.0" height="70.0" fill="#bcb8b4"/>
<rect x="685.5" y="188.5" width="32.0" height="70.0" fill="#a89278"/>
<rect x="687.5" y="200.5" width="28.0" height="3.0" fill="#6a5a48"/>
<rect x="687.5" y="214.5" width="28.0" height="3.0" fill="#6a5a48"/>
<rect x="687.5" y="228.5" width="28.0" height="3.0" fill="#6a5a48"/>
<rect x="691.5" y="218.5" width="14.0" height="6.0" fill="#e0e4e8"/>
<path d="M657.5,258.5 L661.5,236.5 C667.5,228.5 677.5,225.5 683.5,225.5 C693.5,225.5 701.5,230.5 705.5,238.5 L709.5,258.5 Z" fill="#b4aec4" />
<rect x="677.5" y="228.5" width="12.0" height="8.0" fill="#f2f2f2"/>
<ellipse cx="683.5" cy="207.5" rx="10.0" ry="8.0" fill="#e8e8e6" transform="rotate(0 683.5 207.5)"/>
<ellipse cx="682.5" cy="217.5" rx="8.5" ry="10.5" fill="#dcc0a8" transform="rotate(0 682.5 217.5)"/>
<ellipse cx="677.5" cy="246.5" rx="4.0" ry="10.0" fill="#8a9a60" transform="rotate(0 677.5 246.5)"/>
</g></g>
<circle cx="766.0" cy="223.5" r="35.0" fill="#f8f3ea"/>
<g clip-path="url(#cp3)"><g filter="url(#pb)">
<rect x="731.0" y="188.5" width="70.0" height="70.0" fill="#dcdcdc"/>
<rect x="731.0" y="188.5" width="20.0" height="70.0" fill="#cfd0d2"/>
<path d="M731.0,258.5 L733.0,236.5 C741.0,230.5 751.0,228.5 761.0,228.5 L771.0,248.5 L771.0,258.5 Z" fill="#6c7c8a" />
<ellipse cx="765.0" cy="224.5" rx="15.0" ry="17.0" fill="#d8b0a0" transform="rotate(0 765.0 224.5)"/>
<ellipse cx="765.0" cy="207.5" rx="24.0" ry="6.5" fill="#7a6a58" transform="rotate(10 765.0 207.5)"/>
<ellipse cx="768.0" cy="198.5" rx="15.0" ry="9.0" fill="#857460" transform="rotate(0 768.0 198.5)"/>
<g fill="none" stroke="#3a3430" stroke-width="2"><rect x="749.0" y="212.5" width="13" height="8" rx="2"/><rect x="765.0" y="214.5" width="13" height="8" rx="2"/></g>
<ellipse cx="765.0" cy="236.5" rx="7.0" ry="3.0" fill="#c8c0b8" transform="rotate(0 765.0 236.5)"/>
<ellipse cx="781.0" cy="246.5" rx="14.0" ry="9.0" fill="#e0b8a8" transform="rotate(-15 781.0 246.5)"/>
</g></g>
<circle cx="501.0" cy="315.0" r="35.0" fill="#f8f3ea"/>
<g clip-path="url(#cp4)"><g filter="url(#pb)">
<rect x="466.0" y="280.0" width="70.0" height="70.0" fill="#ccd0d2"/>
<rect x="512.0" y="280.0" width="24.0" height="70.0" fill="#8a8078"/>
<ellipse cx="478.0" cy="316.0" rx="10.0" ry="22.0" fill="#b0b6bc" transform="rotate(0 478.0 316.0)"/>
<ellipse cx="526.0" cy="330.0" rx="12.0" ry="20.0" fill="#6a5e56" transform="rotate(0 526.0 330.0)"/>
<path d="M488.0,328.0 C486.0,304.0 492.0,286.0 508.0,285.0 C522.0,285.0 526.0,298.0 526.0,324.0 L518.0,326.0 C518.0,310.0 514.0,300.0 506.0,300.0 C498.0,300.0 496.0,312.0 498.0,328.0 Z" fill="#5c3a2a" />
<ellipse cx="507.0" cy="307.0" rx="9.5" ry="12.5" fill="#e8c6b2" transform="rotate(0 507.0 307.0)"/>
<path d="M474.0,350.0 L478.0,334.0 C484.0,325.0 496.0,321.0 506.0,321.0 C516.0,321.0 524.0,325.0 528.0,332.0 L532.0,350.0 Z" fill="#cdb7a2" />
<path d="M500.0,322.0 L507.0,336.0 L514.0,322.0 Z" fill="#a89080" />
</g></g>
<circle cx="723.5" cy="315.0" r="35.0" fill="#f8f3ea"/>
<g clip-path="url(#cp5)"><g filter="url(#pb)">
<rect x="688.5" y="280.0" width="70.0" height="70.0" fill="#a8bc48"/>
<ellipse cx="696.5" cy="320.0" rx="14.0" ry="26.0" fill="#d0dc60" transform="rotate(0 696.5 320.0)"/>
<rect x="732.5" y="280.0" width="26.0" height="70.0" fill="#5e6c4c"/>
<ellipse cx="746.5" cy="292.0" rx="16.0" ry="12.0" fill="#c8ccc0" transform="rotate(0 746.5 292.0)"/>
<ellipse cx="744.5" cy="320.0" rx="12.0" ry="14.0" fill="#8a9480" transform="rotate(0 744.5 320.0)"/>
<path d="M690.5,350.0 L692.5,332.0 C700.5,322.0 710.5,319.0 724.5,319.0 C736.5,319.0 746.5,323.0 752.5,330.0 L756.5,350.0 Z" fill="#a9c1d2" />
<path d="M712.5,320.0 C716.5,332.0 732.5,332.0 736.5,320.0 Z" fill="#7e98ac" />
<ellipse cx="724.5" cy="288.0" rx="10.5" ry="6.5" fill="#c8a474" transform="rotate(0 724.5 288.0)"/>
<ellipse cx="724.5" cy="300.0" rx="10.5" ry="13.0" fill="#e2b492" transform="rotate(0 724.5 300.0)"/>
<ellipse cx="725.5" cy="309.0" rx="7.0" ry="4.5" fill="#b08462" transform="rotate(0 725.5 309.0)"/>
</g></g>
<circle cx="607.6" cy="363.0" r="35.0" fill="#f8f3ea"/>
<g clip-path="url(#cp6)"><g filter="url(#pb)">
<rect x="572.6" y="328.0" width="70.0" height="70.0" fill="#2c343c"/>
<rect x="616.6" y="328.0" width="26.0" height="70.0" fill="#1f272f"/>
<path d="M576.6,398.0 L580.6,378.0 C586.6,371.0 596.6,368.0 606.6,368.0 C616.6,368.0 622.6,371.0 626.6,378.0 L630.6,398.0 Z" fill="#e8dcd4" />
<rect x="578.6" y="378.0" width="50.0" height="2.5" fill="#c0a090"/>
<rect x="576.6" y="385.0" width="54.0" height="2.5" fill="#c0a090"/>
<rect x="576.6" y="392.0" width="56.0" height="2.5" fill="#c0a090"/>
<ellipse cx="605.6" cy="345.0" rx="15.5" ry="12.0" fill="#c08e58" transform="rotate(0 605.6 345.0)"/>
<ellipse cx="605.6" cy="359.0" rx="11.5" ry="12.5" fill="#ecc6a6" transform="rotate(0 605.6 359.0)"/>
<ellipse cx="622.6" cy="372.0" rx="5.0" ry="11.0" fill="#e8c0a0" transform="rotate(-15 622.6 372.0)"/>
</g></g>
<rect x="426.0" y="253.5" width="65.0" height="20.0" rx="3" fill="#3a2010" opacity="0.25" filter="url(#sh)"/>
<rect x="426.0" y="252.5" width="65.0" height="20.0" rx="3" fill="#ebe7da"/>
<text x="458.5" y="267.5" text-anchor="middle" font-family="Liberation Serif" font-style="italic" font-size="14.5" fill="#6f6a5a">Бабушка</text>
<rect x="509.0" y="253.5" width="65.0" height="20.0" rx="3" fill="#3a2010" opacity="0.25" filter="url(#sh)"/>
<rect x="509.0" y="252.5" width="65.0" height="20.0" rx="3" fill="#ebe7da"/>
<text x="541.5" y="267.5" text-anchor="middle" font-family="Liberation Serif" font-style="italic" font-size="14.5" fill="#6f6a5a">Дедушка</text>
<rect x="650.0" y="253.5" width="64.0" height="20.0" rx="3" fill="#3a2010" opacity="0.25" filter="url(#sh)"/>
<rect x="650.0" y="252.5" width="64.0" height="20.0" rx="3" fill="#ebe7da"/>
<text x="682.0" y="267.5" text-anchor="middle" font-family="Liberation Serif" font-style="italic" font-size="14.5" fill="#6f6a5a">Бабушка</text>
<rect x="737.0" y="253.5" width="64.0" height="20.0" rx="3" fill="#3a2010" opacity="0.25" filter="url(#sh)"/>
<rect x="737.0" y="252.5" width="64.0" height="20.0" rx="3" fill="#ebe7da"/>
<text x="769.0" y="267.5" text-anchor="middle" font-family="Liberation Serif" font-style="italic" font-size="14.5" fill="#6f6a5a">Дедушка</text>
<rect x="468.5" y="344.0" width="65.0" height="20.0" rx="3" fill="#3a2010" opacity="0.25" filter="url(#sh)"/>
<rect x="468.5" y="343.0" width="65.0" height="20.0" rx="3" fill="#ebe7da"/>
<text x="501.0" y="358.0" text-anchor="middle" font-family="Liberation Serif" font-style="italic" font-size="14.5" fill="#6f6a5a">Мама</text>
<rect x="691.0" y="344.0" width="64.5" height="20.0" rx="3" fill="#3a2010" opacity="0.25" filter="url(#sh)"/>
<rect x="691.0" y="343.0" width="64.5" height="20.0" rx="3" fill="#ebe7da"/>
<text x="723.2" y="358.0" text-anchor="middle" font-family="Liberation Serif" font-style="italic" font-size="14.5" fill="#6f6a5a">Папа</text>
<rect x="575.0" y="392.2" width="64.5" height="20.3" rx="3" fill="#3a2010" opacity="0.25" filter="url(#sh)"/>
<rect x="575.0" y="391.2" width="64.5" height="20.3" rx="3" fill="#ebe7da"/>
<text x="607.2" y="406.2" text-anchor="middle" font-family="Liberation Serif" font-style="italic" font-size="14.5" fill="#6f6a5a">Я</text>
<rect x="370.3" y="130.8" width="486.7" height="354.7" fill="none" stroke="#f8f0e0" stroke-width="1.2"/>
<rect x="370.3" y="130.8" width="486.7" height="354.7" fill="none" stroke="#222" stroke-width="1.2" stroke-dasharray="2.5 2.5"/>
<path d="M613.5 115 V127" stroke="#222" stroke-width="1.2" stroke-dasharray="2.5 2.5"/>
<rect x="366.7" y="127.3" width="6" height="6" rx="1" fill="#e8e8f0" stroke="#333" stroke-width="1"/>
<rect x="610.4" y="127.3" width="6" height="6" rx="1" fill="#e8e8f0" stroke="#333" stroke-width="1"/>
<rect x="854.0" y="127.3" width="6" height="6" rx="1" fill="#e8e8f0" stroke="#333" stroke-width="1"/>
<rect x="366.7" y="304.6" width="6" height="6" rx="1" fill="#e8e8f0" stroke="#333" stroke-width="1"/>
<rect x="854.0" y="304.6" width="6" height="6" rx="1" fill="#e8e8f0" stroke="#333" stroke-width="1"/>
<rect x="366.7" y="482.5" width="6" height="6" rx="1" fill="#e8e8f0" stroke="#333" stroke-width="1"/>
<rect x="610.4" y="482.5" width="6" height="6" rx="1" fill="#e8e8f0" stroke="#333" stroke-width="1"/>
<rect x="854.0" y="482.5" width="6" height="6" rx="1" fill="#e8e8f0" stroke="#333" stroke-width="1"/>
</svg>
<!--/COLLAGE-->
<div id="status">
  <span style="left:4px">Проект:&nbsp; Новый проект</span>
  <div class="vs" style="left:260px"></div>
  <span style="left:264px">Размер:&nbsp; 2000x1500</span>
  <div class="vs" style="left:357px"></div>
  <span style="left:361px">Слоев:&nbsp; 25</span>
  <div class="vs" style="left:421px"></div>
  <span style="left:426px">Для вызова справки нажмите F1.</span>
  <div class="vs" style="left:575px"></div>
  <div style="left:592px;top:4px;width:10px;height:11px;border:1px solid #5a5a5a"></div>
  <span style="left:610px;color:#6e6e6e">Уместить</span>
  <div style="left:673px;top:4px;width:11px;height:11px;border-radius:50%;background:#f2f2f2"></div>
  <div style="left:675.5px;top:9px;width:6px;height:1.5px;background:#333"></div>
  <div style="left:696px;top:3px;width:66px;height:14px;background:#fafafa;border:1px solid #888"></div>
  <span style="left:699px;top:0;color:#222">100%</span>
  <div style="left:749px;top:4px;width:12px;height:12px;background:linear-gradient(#a0a0a0,#707070);border:1px solid #555"></div>
  <div style="left:752.5px;top:9px;border-left:2.5px solid transparent;border-right:2.5px solid transparent;border-top:3px solid #333"></div>
  <div style="left:775px;top:4px;width:11px;height:11px;border-radius:50%;background:#f2f2f2"></div>
  <div style="left:777.5px;top:9px;width:6px;height:1.5px;background:#333"></div>
  <div style="left:779.8px;top:6.5px;width:1.5px;height:6px;background:#333"></div>
</div>

<div id="menu">
  <div class="strip"></div>
  <!-- icons -->
  <div style="left:5px;top:3px;width:12px;height:15px;background:linear-gradient(90deg,#f2f2f2,#e2e2e2);border:1px solid #b8b8b8;border-radius:1px"></div>
  <div style="left:13px;top:3px;width:4px;height:4px;background:#d0d0d0"></div>
  <div style="left:4px;top:41px;width:14px;height:11px;background:linear-gradient(#6cc0f0,#3a8fd0)"></div>
  <svg style="left:4px;top:41px" width="15" height="15" viewBox="0 0 15 15"><path d="M0 10 L4 6 L7 9 L10 5 L14 9 L14 11 L0 11Z" fill="#2a5a7a"/><circle cx="5" cy="3" r="1.5" fill="#f8e070"/><path d="M7 10 h4 v-2 l4 3.5 l-4 3.5 v-2 h-4z" fill="#3cb83c"/></svg>
  <div style="left:3px;top:97px;width:16px;height:14px;background:linear-gradient(#ffd850,#f0a010);border-radius:1px;transform:skewX(-6deg)"></div>
  <svg style="left:6px;top:134px" width="10" height="15" viewBox="0 0 10 15"><path d="M0 0h10v15l-5-4l-5 4z" fill="#a8a8a8"/><circle cx="5" cy="5.5" r="2.2" fill="#f0d060"/></svg>
  <svg style="left:4px;top:190px" width="15" height="14" viewBox="0 0 15 14"><path d="M5 0h7l2 4h-9z" fill="#c8c8c8"/><rect x="1" y="4" width="13" height="8" rx="1" fill="#707070"/><rect x="7" y="5" width="7" height="7" fill="#d8d8d8"/><rect x="1" y="9" width="3" height="3" fill="#c03030"/></svg>
  <div style="left:4px;top:210px;width:14px;height:10px;background:linear-gradient(#ffb020,#e08010 45%,#3a2a10 55%,#201808)"></div>
  <svg style="left:8px;top:213px" width="10" height="13" viewBox="0 0 10 13"><path d="M3 13v-6h-3l5-6l5 6h-3v6z" fill="#30b030"/></svg>
  <div style="left:5px;top:230px;width:13px;height:11px;background:linear-gradient(135deg,#4aa0f0,#1040c0);border:1px solid #203070;transform:skewY(8deg)"></div>
  <div style="left:9px;top:241px;width:4px;height:4px;background:#b0b0b0"></div>
  <!-- items -->
  <span class="it" style="top:4px">Новый коллаж</span><span class="sc" style="top:4px">Ctrl+N</span>
  <span class="it" style="top:23px">Новая фотокнига</span>
  <div class="sep" style="top:38px"></div>
  <span class="it" style="top:42px">Сохранить как изображение...</span><span class="sc" style="top:42px">Shift+Ctrl+S</span>
  <span class="it" style="top:60px">Сохранить в PDF</span>
  <span class="it" style="top:79px">Сохранить JPEG с настройкой качества</span>
  <div class="sep" style="top:94px"></div>
  <span class="it" style="top:99px">Открыть проект</span><span class="sc" style="top:99px">Ctrl+O</span>
  <span class="it" style="top:116px;color:#b4b4b4">Недавние проекты</span>
  <div class="sep" style="top:131px"></div>
  <span class="it" style="top:136px">Сохранить проект</span><span class="sc" style="top:136px">Ctrl+S</span>
  <span class="it" style="top:154px">Сохранить проект как...</span>
  <span class="it" style="top:173px">Сохранить как шаблон</span>
  <div class="sep" style="top:188px"></div>
  <span class="it" style="top:192px">Печать коллажа</span><span class="sc" style="top:192px">Ctrl+P</span>
  <div class="sep" style="top:207px"></div>
  <span class="it" style="top:212px">Поделиться в социальных сетях</span>
  <div class="sep" style="top:227px"></div>
  <span class="it" style="top:231px">Сделать фоном рабочего стола</span>
  <div class="sep" style="top:246px"></div>
  <span class="it" style="top:251px">Выход</span>
  <div style="left:25px;top:40px;width:158px;height:53.5px;border:2px solid #e0202a"></div>
</div>
</body></html>
